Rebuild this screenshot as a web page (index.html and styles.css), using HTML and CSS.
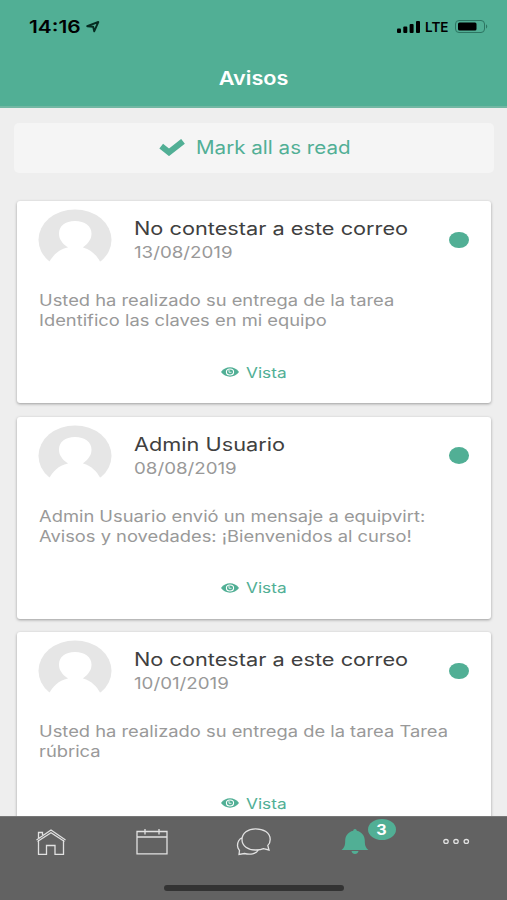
FILE: index.html
```
<!DOCTYPE html>
<html lang="es">
<head>
<meta charset="utf-8">
<title>Avisos</title>
<link rel="stylesheet" href="styles.css">
</head>
<body>
<svg width="0" height="0" class="defs">
  <symbol id="avatar" viewBox="0 0 74 62">
    <ellipse cx="37" cy="30.800" rx="36.500" ry="30.300" fill="#e6e6e6"/>
    <path d="M0 62 V52.500 H11.500 C15 47 20 40.500 30 38.500 C28 36.500 25 35.500 23 31.500 C21.500 29.500 21 27 21 24.500 C21 17 27 12 37 12 S53.500 17 53.500 24.500 C53.500 27 53 29.500 51.500 31.500 C49.500 35.500 46.500 36.500 45 38.500 C54 41 59 47 62 52.500 H74 V62Z" fill="#fff"/>
  </symbol>
  <symbol id="eye" viewBox="0 0 18 10">
    <path d="M0 5 C4.500-1.200 13.500-1.200 18 5 C13.500 11.200 4.500 11.200 0 5Z" fill="#51af95"/>
    <ellipse cx="9" cy="5" rx="3.600" ry="3" fill="none" stroke="#fff" stroke-width="1.100"/>
    <path d="M8 3 V5.300 H10.500" fill="none" stroke="#fff" stroke-width=".8"/>
  </symbol>
</svg>
<header class="header">
  <div class="status">
    <div class="clock"><span class="time">14:16</span>
      <svg width="14" height="12" viewBox="0 0 14 12"><path d="M1.200 5.200 L12.300 1 L8.200 10.300 L7.200 5.800Z" fill="none" stroke="#062d22" stroke-width="1.900" stroke-linejoin="round"/></svg>
    </div>
    <div class="signal">
      <svg width="24" height="12" viewBox="0 0 24 12"><rect x="0" y="7.500" width="4" height="4.500" rx="1"/><rect x="6.300" y="5.500" width="4" height="6.500" rx="1"/><rect x="12.600" y="3" width="4" height="9" rx="1"/><rect x="19" y="0" width="4" height="12" rx="1"/></svg>
      <span class="lte">LTE</span>
      <svg width="34" height="13" viewBox="0 0 34 13"><rect x=".5" y=".5" width="29" height="12" rx="3.500" fill="none" stroke="#2d7562"/><rect x="3" y="2.500" width="18.500" height="8" rx="1.500"/><path d="M31 4.300 Q33.500 6.500 31 8.700Z" fill="#2d7562"/></svg>
    </div>
  </div>
  <h1 class="title">Avisos</h1>
</header>
<main class="content">
  <button class="mark">
    <svg width="26" height="17" viewBox="0 0 26 17"><path d="M2.200 7.200 L10 13.300 L24 2.300" fill="none" stroke="#51af95" stroke-width="6"/></svg>
    <span class="mark-label">Mark all as read</span>
  </button>
  <article class="card">
    <div class="top"><svg class="avatar"><use href="#avatar"/></svg>
      <div class="who"><h2 class="name">No contestar a este correo</h2><time class="date">13/08/2019</time></div><i class="dot"></i></div>
    <p class="text">Usted ha realizado su entrega de la tarea<br>Identifico las claves en mi equipo</p>
    <a class="view"><svg class="eye"><use href="#eye"/></svg><span class="view-label">Vista</span></a>
  </article>
  <article class="card">
    <div class="top"><svg class="avatar"><use href="#avatar"/></svg>
      <div class="who"><h2 class="name">Admin Usuario</h2><time class="date">08/08/2019</time></div><i class="dot"></i></div>
    <p class="text">Admin Usuario envió un mensaje a equipvirt:<br>Avisos y novedades: ¡Bienvenidos al curso!</p>
    <a class="view"><svg class="eye"><use href="#eye"/></svg><span class="view-label">Vista</span></a>
  </article>
  <article class="card">
    <div class="top"><svg class="avatar"><use href="#avatar"/></svg>
      <div class="who"><h2 class="name">No contestar a este correo</h2><time class="date">10/01/2019</time></div><i class="dot"></i></div>
    <p class="text">Usted ha realizado su entrega de la tarea Tarea<br>rúbrica</p>
    <a class="view"><svg class="eye"><use href="#eye"/></svg><span class="view-label">Vista</span></a>
  </article>
</main>
<nav class="tabs">
  <div class="tab-row">
    <div class="tab"><svg width="32" height="28" viewBox="0 0 32 28"><path d="M3.500 12 V26.300 H11.500 V17.500 H20 V26.300 H28.500 V12 M1.500 12 L16 2 L30.500 12 M2.500 13.500 L16 4.800 L29.500 13.500 M3.500 10 V4.500 H7.500 V7"/></svg></div>
    <div class="tab"><svg width="32" height="28" viewBox="0 0 32 28"><path d="M1 3.500 H31 V25.800 H1Z M1 9 H31 M9 1 V6.500 M23 1 V6.500"/></svg></div>
    <div class="tab"><svg width="36" height="28" viewBox="0 0 36 28"><path d="M19.500 .800 C27.500 .800 34.200 4.500 34.200 11.500 C34.200 14.500 32.800 16.500 31.800 17.500 L33 22 L27.500 20.700 C25 22 22 22 19.500 22 C12 22 6 18 6 11.500 C6 5 12 .800 19.500 .800Z M6.300 9.500 C3.500 11 1.500 14 1.500 17.500 C1.500 20 2.500 21 3.500 22.500 L3 26.500 L8.500 25.500 C14 27 20 26 22.500 22"/></svg></div>
    <div class="tab"><div class="bell"><svg width="28" height="28" viewBox="0 0 28 28"><path class="fill" d="M14 1 C15.300 1 15.600 2 15.800 2.700 C21 4 23.800 8 23.800 12.500 C23.800 18 25 20 27.500 22 H.5 C3 20 4.200 18 4.200 12.500 C4.200 8 7 4 12.200 2.700 C12.400 2 12.700 1 14 1Z M10.500 23 H17.500 C17 27 11 27 10.500 23Z"/></svg><span class="badge"><span class="count">3</span></span></div></div>
    <div class="tab"><svg width="28" height="28" viewBox="0 0 28 28"><ellipse cx="4" cy="13.400" rx="2.200" ry="1.900"/><ellipse cx="14" cy="13.400" rx="2.200" ry="1.900"/><ellipse cx="24.300" cy="13.400" rx="2.200" ry="1.900"/></svg></div>
  </div>
  <div class="indicator"></div>
</nav>
</body>
</html>
```
FILE: styles.css
```
* { box-sizing: border-box; }
body {
  margin: 0;
  height: 900px;
  overflow: hidden;
  display: flex;
  flex-direction: column;
  background: #eeeeee;
  font-family: Inter, "Liberation Sans", sans-serif;
}
.defs { position: absolute; }
svg { display: block; flex: none; }
h1, h2, p { margin: 0; font-weight: 400; }
.header {
  flex: none;
  height: 108px;
  background: #51af95;
  border-bottom: 2px solid #72b7a3;
}
.status {
  display: flex;
  justify-content: space-between;
  padding: 17px 18px 0 29px;
  height: 60px;
}
.clock, .signal { display: flex; height: 20px; align-items: center; }
.clock { height: 19px; }
.signal { height: 19px; }
.time { width: 57px; font-size: 17px; font-weight: 600; white-space: nowrap; transform: scaleX(1.23); transform-origin: left; }
.lte { width: 30px; margin-left: 4px; font-size: 13.500px; font-weight: 600; }
.title {
  width: fit-content;
  margin: 0 auto;
  color: #fff;
  font-size: 19px;
  line-height: 37px;
  font-weight: 600;
  transform: scaleX(1.14);
}
.content { flex: 1; min-height: 0; overflow: hidden; padding: 14.500px 16px 0 17px; }
.mark {
  display: flex;
  align-items: center;
  width: 480px;
  height: 50px;
  margin: 0 0 28.500px -3px;
  padding: 0 0 0 145px;
  border: 0;
  border-radius: 5px;
  background: #f5f5f5;
  color: #51af95;
  font: inherit;
}
.mark-label { margin-left: 11px; font-size: 18px; white-space: nowrap; transform: scaleX(1.143); transform-origin: left; }
.card {
  height: 202px;
  margin-bottom: 13.500px;
  padding: 8px 22px 0 21px;
  border-radius: 3px;
  background: #fff;
  box-shadow: 0 1px 3px rgba(0, 0, 0, .35);
}
.top { display: flex; height: 82px; }
.avatar { width: 74px; height: 62px; }
.who { flex: 1; padding: 8px 0 0 21.500px; white-space: nowrap; }
.name, .date, .text { width: fit-content; transform-origin: left; }
.name { color: #404040; font-size: 18px; line-height: 24px; transform: scaleX(1.207); }
.date { display: block; color: #999; font-size: 16px; line-height: 22px; transform: scaleX(1.17); }
.dot { width: 20px; height: 16.500px; margin-top: 22.500px; border-radius: 50%; background: #51af95; }
.text {
  height: 61px;
  margin-left: 1px;
  color: #999;
  font-size: 15.500px;
  line-height: 20px;
  white-space: nowrap;
  transform: scaleX(1.183);
}
.view { display: flex; align-items: center; height: 40px; padding-left: 182.500px; color: #51af95; }
.eye { width: 18px; height: 10px; }
.view-label { margin-left: 7.500px; font-size: 14.500px; transform: scaleX(1.19); transform-origin: left; }
.tabs { flex: none; height: 84px; background: #626262; border-top: 1px solid #777; }
.tab-row { display: flex; height: 68px; padding-top: 11px; }
.tab { flex: 1; display: flex; justify-content: center; }
.tab svg { fill: none; stroke: #e1e1e1; stroke-width: 1.300; }
.tab svg .fill { fill: #51af95; stroke: none; }
.bell { position: relative; }
.badge {
  position: absolute;
  left: 27px;
  top: -9px;
  width: 28px;
  height: 21px;
  border-radius: 50%;
  background: #51af95;
  color: #fff;
  font-size: 14px;
  line-height: 21px;
  font-weight: 700;
  text-align: center;
}
.count { display: inline-block; transform: scaleX(1.15); }
.indicator { width: 180px; height: 6px; margin: 0 0 0 164px; border-radius: 3px; background: #333; }
```
